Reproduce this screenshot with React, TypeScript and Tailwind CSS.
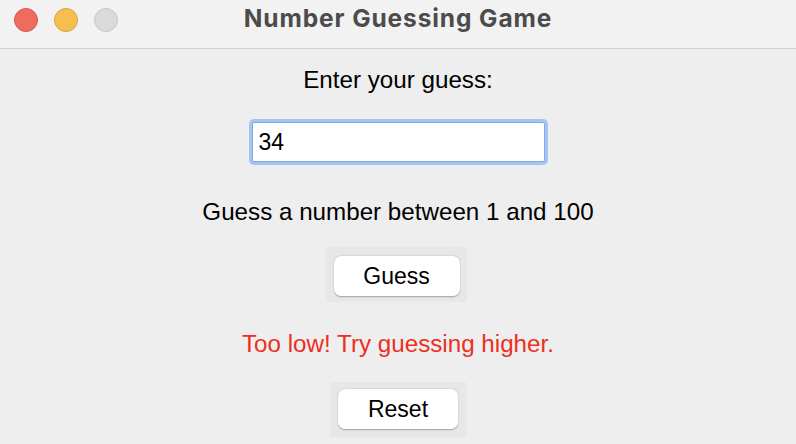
export default function App() {
  return (
    <div className="w-[796px] h-[444px] overflow-hidden bg-[#eeeeee] flex flex-col font-['Liberation_Sans',Arial,sans-serif] text-black">
      {/* title bar */}
      <div className="h-[49px] shrink-0 bg-[#f2f2f2] border-b border-[#d2d2d2] grid grid-cols-[1fr_auto_1fr] items-start">
        <div className="flex items-center gap-4 pl-[14px] pt-[8px]">
          <span className="w-6 h-6 rounded-full bg-[#ee6b60] border border-[#d8594f]" />
          <span className="w-6 h-6 rounded-full bg-[#f6be4f] border border-[#d9a341]" />
          <span className="w-6 h-6 rounded-full bg-[#dadada] border border-[#c6c6c6]" />
        </div>
        <h1 className="pt-[4px] text-[24.5px] leading-[28px] tracking-[0.9px] font-bold text-[#4b4b4b] font-['Inter',sans-serif]">
          Number Guessing Game
        </h1>
        <div />
      </div>

      {/* body */}
      <div className="flex flex-col items-center text-[24.2px] leading-[26px]">
        <p className="mt-[18px]">Enter your guess:</p>

        <div className="mt-[29px] w-[293px] h-[40px] bg-white rounded-[2px] border border-[#86a9e0] shadow-[0_0_0_3px_#a6c4f0] flex items-center pl-[6px]">
          <span className="text-[23px]">34</span>
        </div>

        <p className="mt-[37px]">Guess a number between 1 and 100</p>

        <div className="mt-[22px] mr-[3px] w-[141px] h-[55px] bg-[#e7e7e7] flex items-start justify-center pt-[9px]">
          <button className="w-[126px] h-[40px] bg-white rounded-[7px] shadow-[0_0.5px_1.5px_rgba(0,0,0,0.3)] text-[23px] leading-none">
            Guess
          </button>
        </div>

        <p className="mt-[29px] text-[#ec2f22]">Too low! Try guessing higher.</p>

        <div className="mt-[25px] w-[136px] h-[55px] bg-[#e7e7e7] flex items-start justify-center pt-[7px]">
          <button className="w-[120px] h-[40px] bg-white rounded-[7px] shadow-[0_0.5px_1.5px_rgba(0,0,0,0.3)] text-[23px] leading-none">
            Reset
          </button>
        </div>
      </div>
    </div>
  );
}
